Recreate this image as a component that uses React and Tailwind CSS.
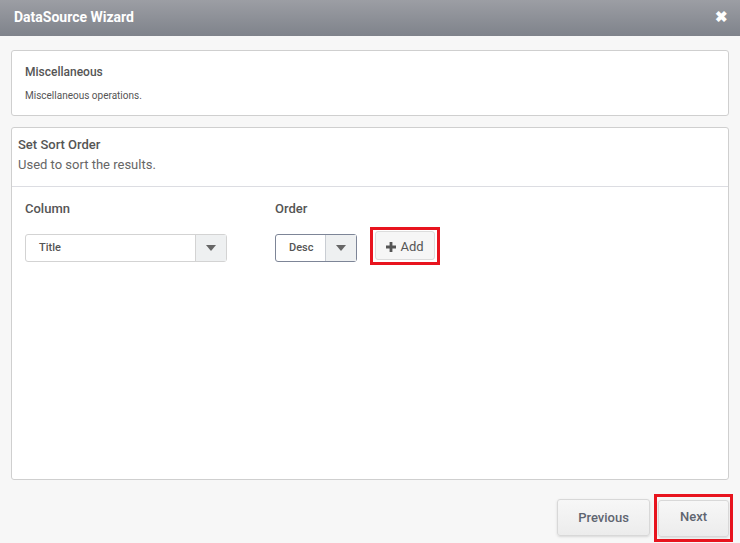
import React from "react";

function SelectBox({ value, width, dark }) {
  return (
    <div
      className={`flex h-[28px] items-stretch rounded-[3px] border bg-white ${dark ? "border-[#7d8597]" : "border-[#d3d3d3]"}`}
      style={{ width }}
    >
      <div className="flex flex-1 items-center pl-[13px] pt-[2px] text-[11px] font-medium text-[#555]">{value}</div>
      <div className={`flex w-[31px] items-center justify-center border-l bg-[#eef0f1] ${dark ? "border-[#c9cdd3]" : "border-[#d3d3d3]"}`}>
        <svg width="10" height="6" viewBox="0 0 10 6"><path d="M0 0h10L5 6z" fill="#666" /></svg>
      </div>
    </div>
  );
}

export default function App() {
  return (
    <div className="flex h-[543px] w-[740px] flex-col bg-[#f7f7f7] font-['Roboto',sans-serif]">
      <div className="flex h-[36px] shrink-0 items-center justify-between bg-gradient-to-b from-[#9c9ea4] to-[#7f838b] pb-[2px] pl-[14px] pr-[12px]">
        <div className="text-[14px] font-bold text-white">DataSource Wizard</div>
        <div className="text-[15px] font-bold leading-none text-white">✖</div>
      </div>

      <div className="flex flex-1 flex-col px-[11px] pt-[14px]">
        <div className="h-[66px] rounded-[3px] border border-[#cfcfcf] bg-white px-[13px] pt-[12px]">
          <div className="text-[12px] font-medium text-[#555]">Miscellaneous</div>
          <div className="mt-[7px] text-[10px] text-[#555]">Miscellaneous operations.</div>
        </div>

        <div className="mt-[11px] flex h-[353px] flex-col rounded-[3px] border border-[#cfcfcf] bg-white">
          <div className="h-[59px] border-b border-[#dcdde2] px-[6px] pt-[9px]">
            <div className="text-[13px] font-medium leading-[16px] text-[#555]">Set Sort Order</div>
            <div className="mt-[4px] text-[13px] leading-[16px] text-[#666]">Used to sort the results.</div>
          </div>
          <div className="flex px-[13px] pt-[12px]">
            <div className="w-[250px]">
              <div className="text-[13px] font-medium text-[#555]">Column</div>
              <div className="mt-[15px]">
                <SelectBox value="Title" width={202} />
              </div>
            </div>
            <div>
              <div className="text-[13px] font-medium text-[#555]">Order</div>
              <div className="mt-[15px] flex items-start">
                <SelectBox value="Desc" width={82} dark />
                <div className="ml-[13px] mt-[-7px] flex h-[38px] w-[70px] items-center justify-center border-[3px] border-[#e8141e]">
                  <div className="flex h-[29px] w-[60px] items-center justify-center gap-[4px] rounded-[3px] border border-[#dcdcdc] bg-[#f6f6f6] pt-[3px] text-[13px] text-[#555]">
                    <svg width="10" height="10" viewBox="0 0 10 10"><path d="M3.6 0h2.8v3.6H10v2.8H6.4V10H3.6V6.4H0V3.6h3.6z" fill="#555" /></svg>
                    Add
                  </div>
                </div>
              </div>
            </div>
          </div>
        </div>

        <div className="mr-[-4px] mt-[14px] flex justify-end gap-[4px]">
          <div className="mt-[5px] flex h-[37px] w-[93px] items-center justify-center rounded-[3px] border border-[#d8d8d8] bg-gradient-to-b from-[#f7f7f7] to-[#ececec] text-[13px] font-medium text-[#5f6570] shadow-sm">
            Previous
          </div>
          <div className="flex h-[48px] w-[79px] items-center justify-center border-[3px] border-[#e8141e]">
            <div className="flex h-[37px] w-[71px] items-center justify-center rounded-[3px] border border-[#d8d8d8] bg-gradient-to-b from-[#f7f7f7] to-[#ececec] pb-[2px] text-[13px] font-medium text-[#5f6570] shadow-sm">
              Next
            </div>
          </div>
        </div>
      </div>
    </div>
  );
}
